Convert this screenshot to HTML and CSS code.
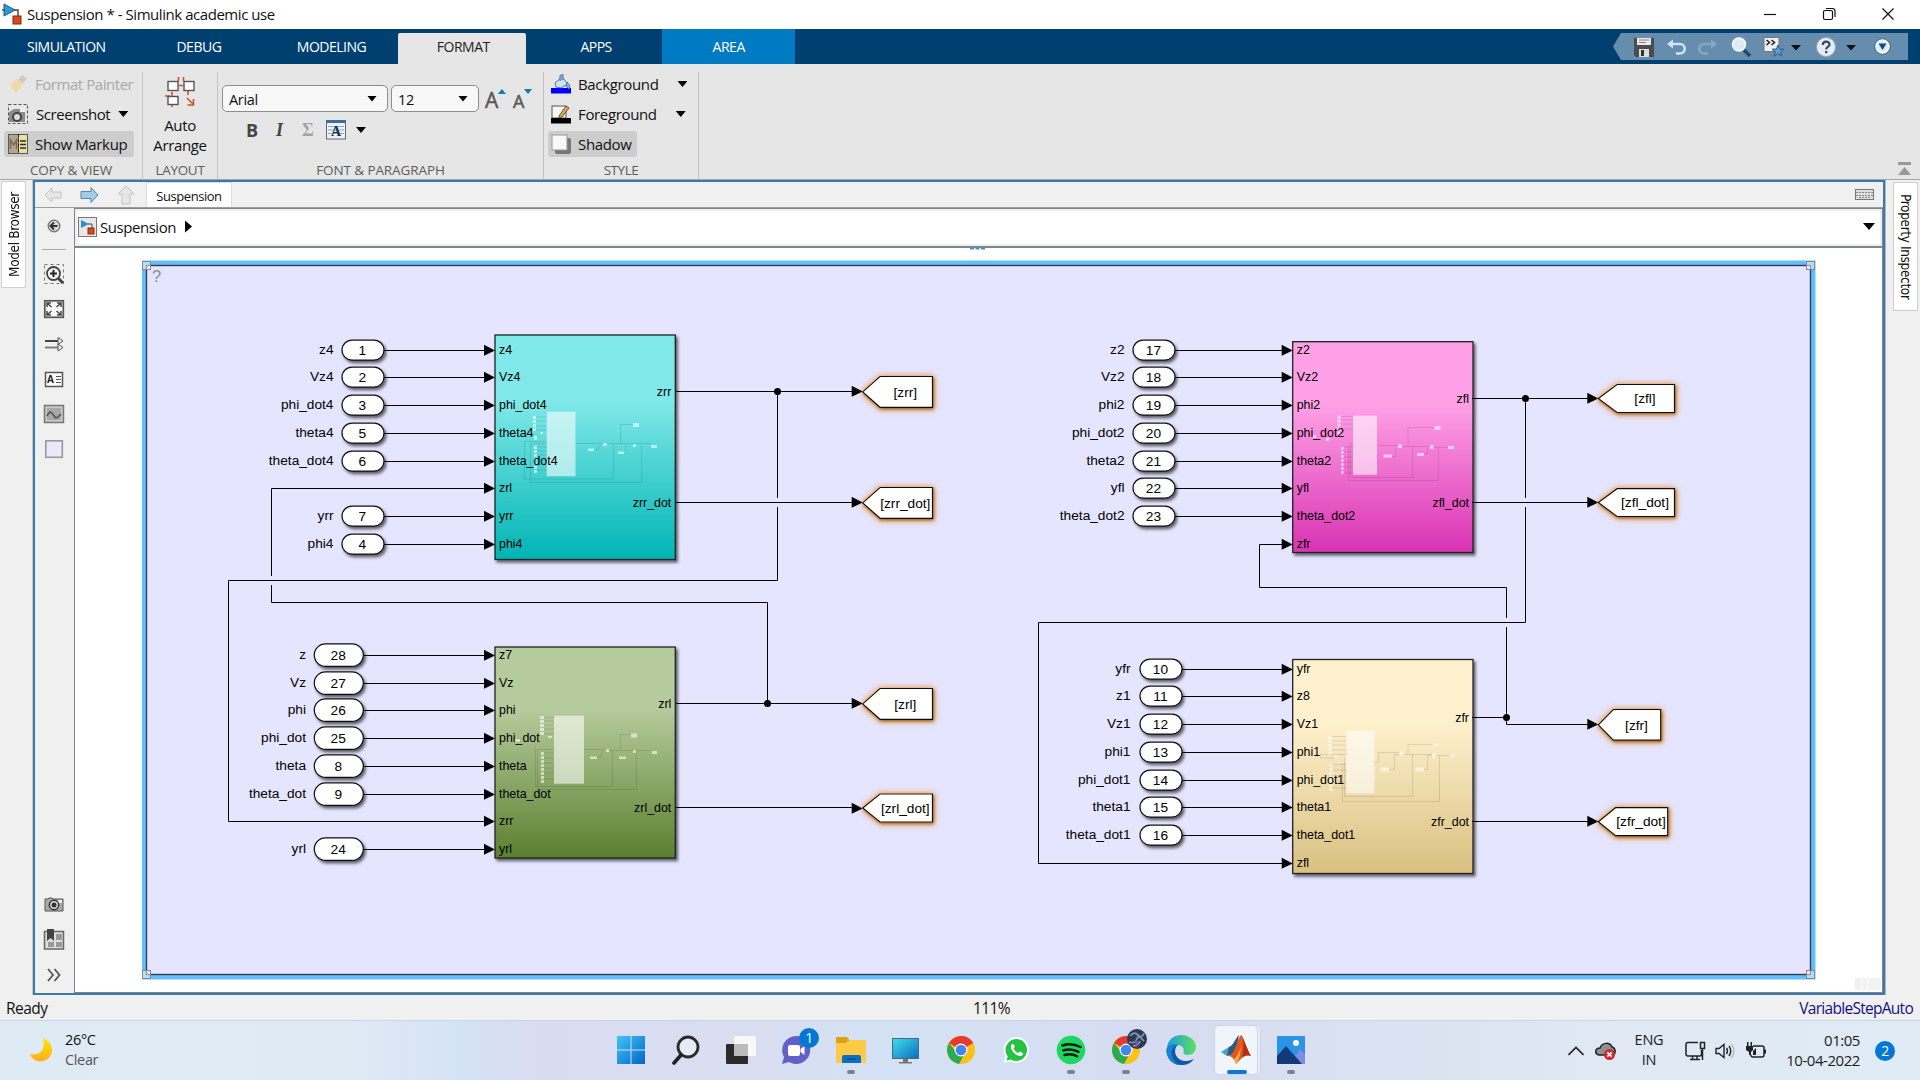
FILE: index.html
```html
<!DOCTYPE html>
<html lang="en">
<head>
<meta charset="utf-8">
<title>Suspension * - Simulink academic use</title>
<link rel="stylesheet" href="styles.css">
</head>
<body>
<div class="app">
  <header class="titlebar">
    <svg class="app-icon" width="20" height="22" viewBox="0 0 20 22"><path d="M2 1v12l11-6z" fill="#2b9bd0" stroke="#14608c"/><path d="M0 7h3M12 7h4v8" fill="none" stroke="#444" stroke-width="1.4"/><rect x="11" y="13" width="8" height="8" fill="#d9481c" stroke="#8c2a0c"/></svg>
    <span class="title">Suspension * - Simulink academic use</span>
    <div class="win-buttons">
      <svg width="14" height="14" viewBox="0 0 14 14"><path d="M1 7.5h12" /></svg>
      <svg width="14" height="14" viewBox="0 0 14 14"><rect x="1.5" y="3.5" width="9" height="9" rx="1.5"/><path d="M4 1.5h6.500a2.500 2.500 0 0 1 2.500 2.500V10"/></svg>
      <svg width="14" height="14" viewBox="0 0 14 14"><path d="M1.500 1.500l11 11M12.500 1.500l-11 11"/></svg>
    </div>
  </header>

  <nav class="tabs">
    <span class="tab">SIMULATION</span>
    <span class="tab">DEBUG</span>
    <span class="tab">MODELING</span>
    <span class="tab active">FORMAT</span>
    <span class="tab">APPS</span>
    <span class="tab area">AREA</span>
    <svg class="quick" width="295" height="27" viewBox="1613 33 295 27">
      <path d="M1613 46.500l8-13.500h287v27h-287z" fill="#668dae"/>
      <path d="M1634 38h20v19h-18l-2-2z" fill="#4c4c4c"/><rect x="1637" y="38" width="14" height="7" fill="#e8e8e8"/><path d="M1639 40h10M1639 42.500h7" stroke="#888"/><rect x="1639" y="49" width="10" height="8" fill="#ddd"/><rect x="1641" y="50" width="3" height="6" fill="#333"/>
      <path d="M1671 44h9a4.500 4.500 0 0 1 0 9.500h-4" fill="none" stroke="#cfe3f4" stroke-width="2.600"/><path d="M1667 44l6-4.500v9z" fill="#cfe3f4"/>
      <path d="M1713 44h-9a4.500 4.500 0 0 0 0 9.500h4" fill="none" stroke="#86a8c4" stroke-width="2.600"/><path d="M1717 44l-6-4.500v9z" fill="#86a8c4"/>
      <path d="M1743 49l7 7" stroke="#1d4c73" stroke-width="3.500"/><circle cx="1739" cy="44.500" r="6.500" fill="#dfeaf3" stroke="#f8fbfd" stroke-width="1.500"/>
      <rect x="1764" y="37.500" width="15" height="14" fill="#f0f0f0" stroke="#777"/><path d="M1766.500 40l3 2.500-3 2.500M1771.500 40l3 2.500-3 2.500" fill="none" stroke="#222" stroke-width="1.600"/><path d="M1778 45l1.600 4 4.400.2-3.400 2.700 1.200 4.300-3.800-2.400-3.800 2.400 1.200-4.300-3.400-2.700 4.400-.2z" fill="#5f9bd0" stroke="#2f5f8c"/>
      <path d="M1791 45h10l-5 5.500z" fill="#111"/>
      <circle cx="1826" cy="47" r="9.500" fill="#e9edf2" stroke="#98a8b8"/><path d="M1822.800 45c0-4.500 6.700-4.300 6.700-.6 0 2.600-3.300 2.400-3.300 5M1826.200 51v2.200" fill="none" stroke="#3a4a66" stroke-width="2.300"/>
      <path d="M1846 45h10l-5 5.500z" fill="#111"/>
      <circle cx="1882.500" cy="46.500" r="6.500" fill="#dfe9f2" stroke="#fff" stroke-width="2"/><circle cx="1882.500" cy="46.500" r="7.800" fill="none" stroke="#2a628f" stroke-width=".8"/><path d="M1878.500 43.500h8l-4 6.500z" fill="#0b4f86"/>
    </svg>
  </nav>

  <section class="ribbon">
    <div class="group g-copy">
      <div class="rows">
        <div class="cmd disabled"><svg width="20" height="20" viewBox="0 0 20 20"><path d="M14 1l5 4-5 5-4-4z" fill="#c9c9c9"/><path d="M10 5l5 5-7 9-7-9z" fill="#eddca4"/></svg><span>Format Painter</span></div>
        <div class="cmd"><svg width="20" height="20" viewBox="0 0 20 20"><rect x=".5" y=".5" width="19" height="19" fill="none" stroke="#555" stroke-dasharray="3 2"/><path d="M1 8l5-3h11v13H1z" fill="#8b8b8b"/><rect x="12" y="4" width="5" height="4" fill="#eee"/><circle cx="9" cy="13" r="5" fill="#444"/><circle cx="9" cy="13" r="3" fill="#ddd"/></svg><span class="shift">Screenshot</span><i class="tri"></i></div>
        <div class="cmd pressed"><svg width="20" height="20" viewBox="0 0 20 20"><rect width="20" height="20" fill="#4a5a78"/><rect x="1" y="1" width="9" height="18" fill="#b9a58a"/><rect x="11" y="1" width="8" height="18" fill="#f5df8c"/><path d="M2.500 15V6l3 5 3-5v9" fill="none" stroke="#7a6a50" stroke-width="1.500"/><path d="M12 7h6M12 10.500h6M12 14h6" stroke="#1d2c50" stroke-width="1.600"/><path d="M10.500 0v20" stroke="#222" stroke-dasharray="3 2"/></svg><span>Show Markup</span></div>
      </div>
      <div class="glabel">COPY &amp; VIEW</div>
    </div>
    <div class="group g-layout">
      <div class="big">
        <svg width="32" height="32" viewBox="0 0 32 32"><g fill="none" stroke="#d4512c" stroke-width="1.600"><path d="M14.500 1v4M19.500 1v4M15 9.500h4M8 16v5M24 15v4M1 20h5M8 26v5"/><path d="M23 22l7 7M29.500 23v6h-6"/></g><g fill="#fff" stroke="#555" stroke-width="1.400"><rect x="4" y="5.500" width="10" height="9"/><rect x="20" y="5.500" width="10" height="9"/><rect x="4" y="20.500" width="10" height="8"/></g></svg>
        <span>Auto</span><span>Arrange</span>
      </div>
      <div class="glabel">LAYOUT</div>
    </div>
    <div class="group g-font">
      <div class="fontrow">
        <div class="combo family"><span>Arial</span><i class="tri"></i></div>
        <div class="combo size"><span>12</span><i class="tri"></i></div>
        <div class="grow"><b>A</b><i class="up"></i></div>
        <div class="grow small"><b>A</b><i class="dn"></i></div>
      </div>
      <div class="stylerow">
        <span class="st-b">B</span><span class="st-i">I</span><span class="st-s">Σ</span>
        <svg width="20" height="20" viewBox="0 0 20 20"><rect x=".5" y=".5" width="19" height="18.500" fill="#eef2f6" stroke="#5b6876"/><rect width="20" height="3" fill="#3d6f9e"/><path d="M2 6.500h16M2 10h16M2 13.500h16" stroke="#88a8c8"/><text x="10" y="16" text-anchor="middle" class="ico-a">A</text></svg>
        <i class="tri"></i>
      </div>
      <div class="glabel">FONT &amp; PARAGRAPH</div>
    </div>
    <div class="group g-style">
      <div class="rows">
        <div class="cmd"><svg width="20" height="20" viewBox="0 0 20 20"><rect y="14" width="20" height="5.500" fill="#00f"/><path d="M4 9l7-6 6 7-7 4-5-1z" fill="#cfe0f0" stroke="#4a76a8"/><path d="M9 7V1.500l3-1V6M16 8l3 4-1 3-3-3z" fill="#8fb4dc" stroke="#4a76a8"/></svg><span>Background</span><i class="tri far"></i></div>
        <div class="cmd"><svg width="20" height="20" viewBox="0 0 20 20"><rect x="1" y="2" width="14" height="12" fill="#f6f6f6" stroke="#555"/><path d="M8 12L15 2l3 2-7 9-3 1z" fill="#e0a562" stroke="#6e5030"/><rect y="14" width="20" height="5.500" fill="#000"/></svg><span>Foreground</span><i class="tri far"></i></div>
        <div class="cmd pressed"><svg width="20" height="20" viewBox="0 0 20 20"><rect x="4" y="4" width="16" height="16" rx="2" fill="#777"/><rect x="1" y="1" width="15" height="15" fill="#f8f8f8" stroke="#999"/></svg><span>Shadow</span></div>
      </div>
      <div class="glabel">STYLE</div>
    </div>
    <div class="spacer"></div>
    <svg class="collapse" width="13" height="13" viewBox="0 0 13 13"><path d="M0 0h13v3H0zM6.500 5L13 13H0z" fill="#999"/></svg>
  </section>

  <main class="work">
    <aside class="dock"><div class="docktab left">Model Browser</div></aside>
    <div class="frame">
      <div class="doctabs">
        <svg width="18" height="18" viewBox="0 0 18 18"><path d="M1 9l7-7v4h9v6H8v4z" fill="#e6e6e6" stroke="#c4c4c4"/></svg>
        <svg width="19" height="18" viewBox="0 0 19 18"><path d="M18 9l-7-7.500v4H1v7h10v4z" fill="#a5cbe6" stroke="#5b86a6"/></svg>
        <svg width="18" height="20" viewBox="0 0 18 20"><path d="M9 1l8 8h-4v10H5V9H1z" fill="#e6e6e6" stroke="#c4c4c4"/></svg>
        <span class="doctab">Suspension</span>
        <svg class="kbd" width="19" height="11" viewBox="0 0 19 11"><rect x=".5" y=".5" width="18" height="10" fill="#ddd" stroke="#777"/><path d="M1 3.500h17M1 6.500h17M4 8.500h11" stroke="#888" stroke-dasharray="2 1"/></svg>
      </div>
      <div class="editor">
        <div class="palette">
          <svg width="22" height="22" viewBox="0 0 22 22"><circle cx="11" cy="11" r="5.800" fill="#ddd" stroke="#777" stroke-width="1.400"/><path d="M14.500 11H8M11 7.500L7.500 11l3.500 3.500" fill="none" stroke="#333" stroke-width="2"/></svg>
          <hr>
          <svg width="22" height="22" viewBox="0 0 22 22"><rect x="1.500" y="1.500" width="19" height="19" fill="none" stroke="#777" stroke-dasharray="3 3"/><circle cx="10.500" cy="10.500" r="6.500" fill="#f4f4f4" stroke="#444" stroke-width="1.800"/><path d="M7 10.500h7M10.500 7v7" stroke="#222" stroke-width="2"/><path d="M15 15l5 5" stroke="#444" stroke-width="3"/></svg>
          <svg width="22" height="22" viewBox="0 0 22 22"><rect x="1.800" y="2.800" width="18.500" height="16.500" fill="#fafafa" stroke="#555" stroke-width="1.700"/><path d="M4 9V5h4M18 9V5h-4M4 13v4h4M18 13v4h-4M4.500 5.500l4 3.500M17.500 5.500l-4 3.500M4.500 16.500l4-3.500M17.500 16.500l-4-3.500" fill="none" stroke="#444" stroke-width="1.500"/></svg>
          <svg width="22" height="22" viewBox="0 0 22 22"><path d="M2 8h15" stroke="#333" stroke-width="1.800"/><path d="M2 14.500h15" stroke="#777" stroke-width="1.800"/><path d="M15 4.500v7l5-3.500zM15 11v7l5-3.500z" fill="#eee" stroke="#555"/></svg>
          <svg width="22" height="22" viewBox="0 0 22 22"><rect x="2.500" y="4.500" width="17" height="14" fill="#fcfcfc" stroke="#555" stroke-width="1.500"/><text x="4" y="15" class="pal-a">A</text><path d="M13 8.500h5M13 11.500h5M13 14.500h5" stroke="#555"/></svg>
          <svg width="22" height="22" viewBox="0 0 22 22"><rect x="1.500" y="2.500" width="19" height="17" fill="#c8c8c8" stroke="#777" stroke-width="1.500"/><rect x="4" y="5" width="14" height="12" fill="#a8a8a8"/><path d="M4 13c3-6 5-4 7 0s4 1 7-2" fill="none" stroke="#555" stroke-width="1.700"/></svg>
          <svg width="22" height="22" viewBox="0 0 22 22"><rect x="2.800" y="2.800" width="16.500" height="16.500" fill="#e9e9fa" stroke="#999" stroke-width="1.600"/></svg>
          <div class="spacer"></div>
          <svg width="22" height="22" viewBox="0 0 22 22"><path d="M2 5h3l1-1h3l1 1h10v12H2z" fill="#aaa" stroke="#555"/><rect x="15" y="6" width="4" height="3" fill="#eee"/><circle cx="11" cy="11" r="4.700" fill="#ddd" stroke="#333" stroke-width="1.500"/><circle cx="11" cy="11" r="2.500" fill="#333"/></svg>
          <svg width="22" height="22" viewBox="0 0 22 22"><rect x="1.500" y="2.500" width="19" height="17.500" fill="#ddd" stroke="#666" stroke-width="1.500"/><path d="M13 5h6v6h-6zM13 13h6v5h-6zM5 13h6v5H5z" fill="#999"/><path d="M4 0h7v12l-3.500-3L4 12z" fill="#444"/></svg>
          <svg width="22" height="22" viewBox="0 0 22 22"><path d="M5 5l5 6-5 6M11.500 5l5 6-5 6" fill="none" stroke="#555" stroke-width="1.800"/></svg>
        </div>
        <div class="view">
          <div class="crumb">
            <svg width="19" height="20" viewBox="0 0 19 20"><rect x=".5" y=".5" width="18" height="19" fill="#e8e8e8" stroke="#777"/><path d="M3 3v8l8-4z" fill="#2b8fd0"/><path d="M10 7h4v4" fill="none" stroke="#444"/><rect x="10" y="11" width="6" height="6" fill="#d9481c" stroke="#8c2a0c"/></svg>
            <span>Suspension</span><i class="play"></i><i class="tri drop"></i>
          </div>
          <svg id="canvas" class="canvas" width="1807" height="744" viewBox="75 248 1807 744"></svg>
        </div>
      </div>
    </div>
    <aside class="dock right"><div class="docktab">Property Inspector</div></aside>
  </main>

  <footer class="status"><span class="ready">Ready</span><span class="zoom">111%</span><span class="solver">VariableStepAuto</span></footer>

  <div class="taskbar">
    <div class="weather">
      <svg width="24" height="26" viewBox="0 0 24 26"><defs><linearGradient id="moon" x1="0" y1="0" x2="0" y2="1"><stop offset="0" stop-color="#ffe600"/><stop offset="1" stop-color="#ffad1f"/></linearGradient></defs><path d="M14 1c11 5 12 17 3 22-6 3-14 1-16-6 10 2 16-5 13-16z" fill="url(#moon)"/></svg>
      <div><div>26°C</div><div class="dim">Clear</div></div>
    </div>
    <div class="apps">
      <div class="app-btn"><svg width="30" height="30" viewBox="0 0 30 30"><defs><linearGradient id="win" x1="0" y1="0" x2="1" y2="1"><stop offset="0" stop-color="#40c4f8"/><stop offset="1" stop-color="#0466c8"/></linearGradient></defs><path d="M1 1h13.500v13.500H1zM15.500 1H29v13.500H15.500zM1 15.500h13.500V29H1zM15.500 15.500H29V29H15.500z" fill="url(#win)"/></svg></div>
      <div class="app-btn"><svg width="30" height="30" viewBox="0 0 30 30"><circle cx="17" cy="12" r="10" fill="#e6ebf6" stroke="#2b2b2b" stroke-width="2.800"/><path d="M10 20l-7 8" stroke="#222" stroke-width="3.600" stroke-linecap="round"/></svg></div>
      <div class="app-btn"><svg width="30" height="30" viewBox="0 0 30 30"><rect y="9" width="22" height="20" rx="1" fill="#2b2b2b"/><rect x="8" y="1" width="22" height="20" rx="1" fill="#fafafa" fill-opacity=".93"/><rect x="8" y="9" width="14" height="12" fill="#bbb"/></svg></div>
      <div class="app-btn"><svg width="30" height="30" viewBox="0 0 30 30"><path d="M15 1a14 14 0 1 1-7 26l-7 2 2-7A14 14 0 0 1 15 1z" fill="#6260c8"/><rect x="7" y="10" width="12" height="11" rx="2" fill="#fff"/><path d="M19.500 14l4-3v9l-4-3z" fill="#fff"/></svg><span class="badge">1</span></div>
      <div class="app-btn run"><svg width="30" height="30" viewBox="0 0 30 30"><path d="M0 2h11l3 4h-3v6H0z" fill="#e0a010"/><path d="M0 8h11l3-3h16v23H0z" fill="#fcca44"/><path d="M6 28v-6q0-2 2-2h15q2 0 2 2v6z" fill="#0b6fc8"/><path d="M11 24h9" stroke="#084b8c" stroke-width="1.500"/></svg></div>
      <div class="app-btn"><svg width="30" height="30" viewBox="0 0 30 30"><defs><linearGradient id="mon" x1="0" y1="0" x2="1" y2="1"><stop offset="0" stop-color="#3fe0ea"/><stop offset="1" stop-color="#0b6cc0"/></linearGradient></defs><rect x="1.500" y="3.500" width="26" height="20" fill="url(#mon)" stroke="#4c6878"/><path d="M12 24h5v3h4v1.500H8V27h4z" fill="#777"/></svg></div>
      <div class="app-btn"><svg width="30" height="30" viewBox="0 0 30 30"><g id="chrome"><circle cx="15" cy="15" r="14" fill="#fbc116"/><path d="M15 15L2.900 8A14 14 0 0 1 27.100 8z" fill="#e33b2e"/><path d="M15 1a14 14 0 0 1 12.100 7H15z" fill="#e33b2e"/><path d="M2.900 8A14 14 0 0 0 13 28.900L19 18l-8 0z" fill="#2da94f"/><circle cx="15" cy="15" r="6.500" fill="#fff"/><circle cx="15" cy="15" r="5.300" fill="#4285f4"/></g></svg></div>
      <div class="app-btn"><svg width="30" height="30" viewBox="0 0 30 30"><path d="M15 2a13 13 0 1 1-6 24.500L2.500 28l1.800-6.500A13 13 0 0 1 15 2z" fill="#fff"/><path d="M15 4a11 11 0 1 1-5.500 20.500L5.500 25.500l1.200-4A11 11 0 0 1 15 4z" fill="#25c33f"/><path d="M11 9c-4 4 4 13 9 12 3-1 2-3 1-3.500l-2.500-1-1.500 1.500c-2-1-3.500-2.500-4.500-4.500l1.300-1.500-1-3z" fill="#fff"/></svg></div>
      <div class="app-btn run"><svg width="30" height="30" viewBox="0 0 30 30"><circle cx="15" cy="15" r="14.300" fill="#1ed760"/><path d="M6.500 10.500q9-3 18 1.500M7.500 15.300q8-2.300 15 1.500M8.500 20q7-2 12.500 1.300" fill="none" stroke="#0b1a10" stroke-width="2.500" stroke-linecap="round"/></svg></div>
      <div class="app-btn run"><svg width="44" height="44" viewBox="-7 -7 44 44"><use href="#chrome"/><circle cx="26" cy="4" r="10" fill="#2c3a52"/><path d="M19 1q4-5 8-1t6-2M18 7q7 2 8-3t7 2M22 11q6-1 7-5" fill="none" stroke="#7f93b8" stroke-width="1.800"/><path d="M24 5q3 3 1 7" stroke="#80589c" stroke-width="2" fill="none"/></svg></div>
      <div class="app-btn"><svg width="30" height="30" viewBox="0 0 30 30"><defs><linearGradient id="edge" x1="0" y1="0" x2="1" y2="0"><stop offset="0" stop-color="#1a9be0"/><stop offset="1" stop-color="#5ee060"/></linearGradient></defs><path d="M1 14C1 5 8 0 15 0c9 0 15 6 15 12 0 5-4 8-8 8-3 0-5-1-4.500-3 1-3-1-7-6-7-6 0-10 3-10.500 4z" fill="url(#edge)"/><path d="M.500 14C3 10 8 8.500 12 10c-5 3-4 15 7 16 4 .300 7-1 9-2.500C25 29 20 30 15 30 6 30 0 23 .500 14z" fill="#0c59a4"/><path d="M11 10c-9 3-6 18 4 20-9 0-14.500-7-14.500-15C3 10 8 9 11 10z" fill="#1583d6"/></svg></div>
      <div class="app-btn run current"><svg width="30" height="30" viewBox="0 0 30 30"><path d="M0 17l8-5 3 3-5 6z" fill="#4a9fd0"/><path d="M8 12c4-1 6-8 10-12l-2 12-5 8-5 1z" fill="#2c5a80"/><path d="M20 0c3 3 6 15 10 21-5-2-9 1-15 8-1-4-3-7-7-8 7-3 8-17 12-21z" fill="#e0581c"/><path d="M20 0c1 9-1 20-7 24 2 2 2 5 2 5 4-5 5-12 5-29z" fill="#f6b040"/><path d="M20 0c3 5 3 12 1 22 4-2 7-2 9-1C26 15 23 3 20 0z" fill="#b03016"/></svg></div>
      <div class="app-btn run"><svg width="30" height="30" viewBox="0 0 30 30"><rect x="1" y="1" width="28" height="28" fill="#2b93e8"/><path d="M14 29l10-15 5 5v10z" fill="#7d8ce8"/><path d="M1 21l9-10 16 18H1z" fill="#123a78"/><circle cx="20" cy="8" r="3" fill="#fff"/></svg></div>
    </div>
    <div class="tray">
      <svg class="chev" width="16" height="10" viewBox="0 0 16 10"><path d="M.500 9L8 1.500 15.500 9" fill="none" stroke="#222" stroke-width="1.600"/></svg>
      <svg class="cloud" width="21" height="18" viewBox="0 0 21 18"><path d="M4 13C-1 12 0 6 5 6c2-6 10-6 12-1 4 1 4 7 1 8z" fill="#909090" stroke="#222" stroke-width="1.500"/><circle cx="14.500" cy="12.500" r="5.500" fill="#d8262e"/><path d="M12.300 10.300l4.400 4.400M16.700 10.300l-4.400 4.400" stroke="#fff" stroke-width="1.700"/></svg>
      <div class="lang"><div>ENG</div><div>IN</div></div>
      <svg class="net" width="21" height="20" viewBox="0 0 21 20" fill="none" stroke="#222" stroke-width="1.500"><path d="M13 1.500H3q-2 0-2 2V13q0 2 2 2h12q1.500 0 1.500-1.500V9M5 18.500h10M7.500 15v3M12 15v3M15.500 1.500h4v6h-4zM17.500 8v11"/></svg>
      <svg class="vol" width="20" height="16" viewBox="0 0 20 16" fill="none" stroke="#222" stroke-width="1.400"><path d="M1 5.500h3L9 1.500v13L4 10.500H1zM11.500 5q2 3 0 6M14 3q3.500 5 0 10"/><path d="M16.500 1q5 7 0 14" stroke="#bbb"/></svg>
      <svg class="bat" width="20" height="18" viewBox="0 0 20 18"><path d="M7 4h9q2 0 2 2v7q0 2-2 2H7q-2 0-2-2" fill="none" stroke="#222" stroke-width="1.500"/><path d="M0 4h7v4L5 10v3H3v-3L0 8zM1 0h1.500v4H1zM4.500 0H6v4H4.500zM18 7.500h2v4h-2z" fill="#222"/><path d="M7 13V9l3-3v7z" fill="#222"/></svg>
      <div class="clock"><div>01:05</div><div>10-04-2022</div></div>
      <span class="notif">2</span>
    </div>
  </div>
</div>
<script src="script.js"></script>
</body>
</html>
```
FILE: styles.css
```css
* { box-sizing: border-box; }
body { margin: 0; background: #f0f0f0; font-family: "Open Sans", "Noto Sans", sans-serif; font-size: 15px; letter-spacing: -0.35px; color: #111; overflow: hidden; }
.app { width: 1920px; height: 1080px; display: flex; flex-direction: column; }
svg { flex: none; display: block; }
.spacer { flex: 1; }

.titlebar { height: 29px; background: #fff; display: flex; align-items: center; padding-left: 2px; }
.app-icon { margin-top: -1px; }
.title { margin-left: 5px; margin-top: -2px; flex: 1; letter-spacing: -0.45px; }
.win-buttons { display: flex; gap: 45px; padding-right: 25px; margin-top: -1px; }
.win-buttons svg { fill: none; stroke: #111; stroke-width: 1.2; }

.tabs { height: 35px; background: #004071; display: flex; align-items: stretch; color: #fff; }
.tab { width: 132.6px; display: flex; align-items: center; justify-content: center; font-size: 14px; letter-spacing: -0.5px; }
.tab.active { width: 128px; margin: 4px 4px 0 0; background: #e6e6e6; color: #222; border-radius: 2px 2px 0 0; padding: 0 0 4px 3px; }
.tab.area { background: #007ac2; }
.quick { margin: 4px 12px 0 auto; }

.ribbon { height: 116px; background: #e6e6e6; border-bottom: 1px solid #a6a6a6; display: flex; padding-top: 8px; }
.group { display: flex; flex-direction: column; border-right: 1px solid #c4c4c4; height: 107px; }
.g-copy { width: 143px; }
.g-layout { width: 75px; }
.g-font { width: 326px; }
.g-style { width: 155px; }
.rows { display: flex; flex-direction: column; padding: 0 0 0 4px; gap: 4px; margin-top: -1px; }
.cmd { height: 26px; display: flex; align-items: center; padding: 0 7px 0 4px; gap: 7px; align-self: flex-start; border-radius: 3px; white-space: nowrap; }
.cmd .shift { margin-left: 1px; margin-right: 1px; letter-spacing: -0.4px; }
.g-style .cmd { padding-left: 3px; }
.g-style .pressed { padding-right: 6px; }
.disabled { color: #a9a9a9; letter-spacing: -0.45px; }
.pressed { background: #cdcdcd; }
.glabel { margin-top: auto; height: 17px; line-height: 17px; text-align: center; font-size: 13.5px; color: #5c5c5c; letter-spacing: -0.1px; }
.g-layout .glabel { letter-spacing: -0.3px; }
.g-style .glabel { letter-spacing: -0.45px; }
.tri { width: 10px; height: 6px; background: #000; clip-path: polygon(0 0, 100% 0, 50% 100%); flex: none; }
.tri.far { margin-left: 12px; }
.big { display: flex; flex-direction: column; align-items: center; padding-top: 4px; line-height: 20px; }
.big svg { margin-bottom: 7px; }
.fontrow { display: flex; padding: 13px 0 0 4px; gap: 3px; align-items: center; }
.combo { height: 27px; border: 1px solid #8e8e8e; border-radius: 5px; background: #f8f8f8; display: flex; align-items: center; justify-content: space-between; padding: 0 10px 0 6px; font-size: 14.5px; }
.combo span { margin-top: 2px; }
.family { width: 166px; }
.size { width: 88px; }
.grow { display: flex; align-items: flex-start; height: 27px; width: 22px; color: #595959; margin-left: 3px; }
.grow b { font: 500 21px/30px "Open Sans", sans-serif; -webkit-text-stroke: .5px #595959; }
.grow.small b { font-size: 18px; line-height: 33px; }
.up, .dn { width: 8px; height: 5px; margin-top: 4px; background: #0a7cb8; clip-path: polygon(50% 0, 100% 100%, 0 100%); flex: none; }
.dn { clip-path: polygon(0 0, 100% 0, 50% 100%); }
.stylerow { display: flex; align-items: center; padding: 8px 0 0 28px; height: 28px; color: #444; letter-spacing: 0; }
.st-b { width: 29px; font: bold 18px "Open Sans", sans-serif; }
.st-i { width: 27px; font: italic bold 18px "Liberation Serif", serif; padding-left: 1px; }
.st-s { width: 24px; font: bold 18px "Liberation Serif", serif; color: #a4a4a4; }
.stylerow .tri { margin-left: 10px; }
.ico-a { font: bold 14px "Liberation Serif", serif; fill: #1c2c44; }
.collapse { align-self: flex-end; margin: 0 9px 4px 0; }

.work { height: 815px; display: flex; }
.dock { width: 33px; padding: 1px 0 0 1px; border-right: 1px solid #c8c8c8; }
.dock.right { border: 0; border-left: 1px solid #b4b4b4; width: 35px; padding: 2px 0 0 7px; }
.docktab { width: 25px; height: 129px; background: #fff; border: 1px solid #cfcfcf; writing-mode: vertical-rl; display: flex; align-items: center; justify-content: center; font: 13.5px "DejaVu Sans Condensed", "DejaVu Sans", sans-serif; letter-spacing: -0.35px; }
.docktab.left { height: 107px; transform: rotate(180deg); }
.frame { width: 1852px; border: 2px solid #3a7aae; display: flex; flex-direction: column; }
.doctabs { height: 26px; border-bottom: 1px solid #9d9d9d; display: flex; align-items: center; padding: 0 9px 0 9px; gap: 18px; }
.doctab { width: 86px; height: 25px; margin-left: -7px; background: #fff; border: 1px solid #ddd; border-bottom: 0; font-size: 13px; line-height: 26px; text-align: center; letter-spacing: -0.45px; }
.kbd { margin-left: auto; }
.editor { flex: 1; display: flex; min-height: 0; }
.palette { width: 40px; border-right: 1px solid #80848e; display: flex; flex-direction: column; align-items: center; padding: 7px 1px 7px 0; gap: 13px; }
.palette hr { width: 24px; height: 1px; border: 0; background: #aaa; margin: -1px 0 0; }
.palette .spacer { margin: 0; }
.pal-a { font: bold 10px "Open Sans", sans-serif; fill: #222; }
.view { flex: 1; background: #fff; border-right: 1px solid #80848e; border-bottom: 1px solid #80848e; }
.crumb { height: 40px; border-top: 1px solid #80848e; border-bottom: 2px solid #80848e; box-shadow: inset 0 0 0 2px #efefef; display: flex; align-items: center; padding: 0 7px 2px 3px; letter-spacing: -0.45px; }
.crumb span { margin-left: 3px; }
.play { width: 7px; height: 12px; margin-left: 9px; background: #000; clip-path: polygon(0 0, 100% 50%, 0 100%); }
.drop { margin-left: auto; width: 12px; height: 7px; }
.canvas { font-family: "Liberation Sans", Arial, sans-serif; letter-spacing: 0; font-size: 13.7px; }
.wire { fill: none; stroke: #000; stroke-width: 1; }
.in-block { font-size: 12.4px; }

.status { height: 25px; display: grid; grid-template-columns: 1fr auto 1fr; align-items: center; padding: 0 7px 0 6px; font-size: 15.5px; letter-spacing: -0.55px; }
.zoom { position: relative; left: 32px; }
.solver { text-align: right; color: #101080; letter-spacing: -0.72px; }

.taskbar { height: 60px; border-top: 1px solid #c9d5e4; background: linear-gradient(90deg, #deebf4 0, #e0eaf5 18%, #d4e2f6 24%, #d9dcf1 28%, #d9def1 40%, #d4e2f5 46%, #d6dcf1 60%, #dbe3f1 75%, #e0e9f4 85%, #dfebf5 100%); display: flex; font-size: 14.5px; }
.weather { display: flex; width: 610px; padding: 9px 0 0 29px; gap: 12px; line-height: 20px; }
.weather svg { margin-top: 7px; }
.weather .dim { color: #555; }
.apps { display: flex; gap: 11px; padding-top: 5px; margin-left: -1px; }
.app-btn { width: 44px; height: 48px; display: flex; align-items: center; justify-content: center; position: relative; border-radius: 4px; }
.app-btn.run::after { content: ""; position: absolute; bottom: 0; left: 18px; width: 8px; height: 4px; border-radius: 2px; background: #7c828c; }
.app-btn.current { background: #f0f4fb; box-shadow: 0 0 0 1px #cdd6e6, 3px 0 0 #e8edf8, 4px 0 0 #cdd6e6; width: 42px; margin: 0 1px; }
.app-btn.current::after { left: 12px; width: 20px; background: #0a78d4; }
.badge { position: absolute; right: -1px; top: 2px; width: 20px; height: 20px; border-radius: 50%; background: #0078d4; color: #fff; font-size: 14px; line-height: 20px; text-align: center; }
.tray { margin-left: auto; display: flex; align-items: center; padding-right: 25px; color: #1c1c1c; line-height: 20px; }
.cloud { margin-left: 11px; }
.lang { width: 40px; text-align: center; margin: -2px 0 0 13px; letter-spacing: -0.2px; }
.net { margin-left: 16px; }
.vol { margin-left: 9px; }
.bat { margin-left: 11px; }
.clock { width: 80px; margin: -2px 0 0 14px; text-align: right; white-space: nowrap; font-size: 15px; letter-spacing: -0.45px; }
.notif { width: 20px; height: 20px; border-radius: 50%; background: #0078d4; color: #fff; text-align: center; font-size: 14px; line-height: 19px; margin-left: 15px; }
```
FILE: script.js
```js
const out = [];
const add = s => out.push(s);

add(`<defs>
<filter id="shadow" x="-20%" y="-20%" width="150%" height="160%"><feDropShadow dx="2" dy="2.500" stdDeviation="1.8" flood-color="#000" flood-opacity=".6"/></filter>
<filter id="glow" x="-30%" y="-60%" width="160%" height="220%"><feDropShadow dx="1" dy="1.500" stdDeviation="1.4" flood-color="#5a3000" flood-opacity=".7"/><feDropShadow dx="0" dy="0" stdDeviation="3.4" flood-color="#f0902c" flood-opacity="1"/></filter>
</defs>`);

// selected area with its resize handles
add(`<rect x="142" y="260.500" width="1673.500" height="719" fill="#64bfff"/>
<rect x="146.500" y="265.500" width="1664" height="709" fill="#e5e5ff" stroke="#3a3a4a" stroke-width="1.400"/>`);
for (const [x, y] of [[142.5, 261.5], [1806.5, 261.5], [142.5, 970.5], [1806.5, 970.5]])
  add(`<rect x="${x}" y="${y}" width="8" height="8" fill="#fff" fill-opacity=".5" stroke="#888"/>`);
add(`<text x="152" y="282" font-size="16.500" fill="#8a8a9a">?</text>
<path d="M970 248.500h4M975.500 248.500h4M981 248.500h4" stroke="#3a93d0" stroke-width="2"/>
<path d="M1855 978h6v12h-6zM1862 978h5v12h-5zM1868 978h13v12h-13z" fill="#f2f2f2"/>`);

const arrow = (x, y) => add(`<path d="M${x - 11} ${y - 5.8}v11l11-5.300z"/>`);
const wire = d => add(`<path class="wire" d="${d}"/>`);

const blocks = [
  { x: 495, y: 335, b: 559.5, c: ['#80e8e8', '#00b4b4'], px: [342, 384], ph: 20, lx: 333.5,
    ports: [['z4', 350.5, 1], ['Vz4', 377.5, 2], ['phi_dot4', 405.5, 3], ['theta4', 433.5, 5], ['theta_dot4', 461.5, 6], ['zrl', 488.5], ['yrr', 516.5, 7], ['phi4', 544.5, 4]],
    outs: [['zrr', 391.5], ['zrr_dot', 502.5]] },
  { x: 495, y: 647, b: 858, c: ['#b5cb9b', '#5b8030'], px: [314.3, 363.3], ph: 22.5, lx: 306,
    ports: [['z7', 655.5, 28, 'z'], ['Vz', 683.5, 27], ['phi', 710.5, 26], ['phi_dot', 738.5, 25], ['theta', 766.5, 8], ['theta_dot', 794.5, 9], ['zrr', 821.5], ['yrl', 849.5, 24]],
    outs: [['zrl', 703.5], ['zrl_dot', 807.5]] },
  { x: 1292.7, y: 341.7, b: 552.5, c: ['#ffa0e6', '#d933b3'], px: [1133, 1175], ph: 20, lx: 1124.5,
    ports: [['z2', 350.5, 17], ['Vz2', 377.5, 18], ['phi2', 405.5, 19], ['phi_dot2', 433.5, 20], ['theta2', 461.5, 21], ['yfl', 488.5, 22], ['theta_dot2', 516.5, 23], ['zfr', 544.5]],
    outs: [['zfl', 398.5], ['zfl_dot', 502.5]] },
  { x: 1292.7, y: 659.5, b: 873.5, c: ['#fff0cd', '#d9c080'], px: [1140, 1182], ph: 20, lx: 1130.5,
    ports: [['yfr', 669.5, 10], ['z8', 696.5, 11, 'z1'], ['Vz1', 724.5, 12], ['phi1', 752.5, 13], ['phi_dot1', 780.5, 14], ['theta1', 807.5, 15], ['theta_dot1', 835.5, 16], ['zfl', 863.5]],
    outs: [['zfr', 717.5], ['zfr_dot', 821.5]] }
];

// thumbnail of each subsystem's contents: big box, small parts, thin connections
const previews = [
  { box: [546.7, 411.7, 28.8, 64.5], parts: [[533, 416, 3, 15], [534, 436, 3, 4], [534, 446, 3, 26], [540, 432, 3, 2], [588, 448.5, 6, 2.5], [603, 443, 4, 3], [618, 451.5, 6, 2.5], [633, 444, 3, 3], [633, 423, 6, 4], [651, 445, 6, 3]],
    lines: 'M536 417h11M536 421h11M536 426h11M536 430h11M536 447h11M536 451h11M536 455h11M536 460h11M536 465h11M536 470h11M576 443.500h75M594 449.500h4.500v-4M620.500 444V424.500h13M625.500 451h0v-6M613.500 444v35H524.500V441.500h22M641.500 446v36.500H530.500V443.500h16' },
  { box: [554, 715.700, 30, 68], parts: [[540, 716, 4, 19], [515, 739, 5, 3], [541, 752, 3, 32], [548, 736, 4, 2], [590, 756.500, 7, 2.500], [606, 749, 3, 3], [619, 756.500, 7, 2.500], [633, 750, 3, 3], [631, 733.500, 6, 4], [652, 751, 5, 3]],
    lines: 'M544 717.500h10M544 721h10M544 725h10M544 729h10M544 733.500h10M544 753h10M544 758h10M544 763h10M544 768h10M544 773h10M544 779h10M584 749.500h24M597 757h4.500v-6M609 750.500h42M620.500 750V734.500h11M612.500 750v36.500H535.500V746M636.500 751v38.500H537.500V749.500h16' },
  { box: [1353, 415.700, 24, 59], parts: [[1337.500, 415.500, 3, 18], [1341, 447, 2.500, 28], [1313, 435, 3, 3], [1326, 438, 3, 3], [1383.500, 454.500, 8.500, 3], [1398, 444.500, 4, 3.500], [1417, 453, 7, 3], [1430, 445, 3.500, 4], [1434.500, 426, 6, 4], [1448, 446, 6, 3]],
    lines: 'M1341 416.500h12M1341 420h12M1341 424h12M1341 429h12M1344 447h9M1344 452h9M1344 457h9M1344 462h9M1344 467h9M1344 473h9M1377 445.500h21M1392 456.500h3.500v-8M1402 446.500h28M1408 446V427.500h26M1412.500 446v31.500H1350.500V442M1424 454h3.500v-6M1434 447.500h14M1438.500 447v33.500H1348.500V445' },
  { box: [1346.500, 730.500, 28, 63], parts: [[1328.500, 736, 3, 17], [1329.500, 764, 3, 25], [1334.500, 755.500, 3, 3], [1380.500, 767.500, 8.500, 4], [1399.500, 751.500, 4, 4], [1415.500, 767.500, 8.500, 4], [1432, 753.500, 4, 4], [1433, 743.500, 5, 2.500], [1450, 754.500, 5, 2]],
    lines: 'M1332 736.500h14M1332 741h14M1332 745h14M1332 750h14M1320.500 754.500h26M1320.500 754v4h14M1332 764.500h14M1332 770h14M1332 776h14M1332 782h14M1332 788h14M1374 762.500h4.500v-10h21M1389 769.500h5.500V754.500h5M1403 754.500h29M1408 754V744.500h25M1412.500 754v42.500H1344.500V758M1424 769.500h3.500V755.500h5M1436 755.500h14M1439.500 756v45.500H1342.500V763' }
];

blocks.forEach((k, i) => {
  add(`<linearGradient id="fill${i}" x1="0" y1="0" x2="0" y2="1"><stop offset=".3" stop-color="${k.c[0]}"/><stop offset="1" stop-color="${k.c[1]}"/></linearGradient>
<rect x="${k.x}" y="${k.y}" width="180.300" height="${k.b - k.y}" fill="url(#fill${i})" stroke="#222" stroke-width="1.300" filter="url(#shadow)"/>`);
  const p = previews[i];
  add(`<path d="${p.lines}" fill="none" stroke="#000" stroke-opacity=".1"/><g fill="#fff" fill-opacity=".58"><rect x="${p.box[0]}" y="${p.box[1]}" width="${p.box[2]}" height="${p.box[3]}"/>`);
  p.parts.forEach(([x, y, w, h]) => {
    for (let dy = 0; dy < h; dy += h > 8 ? 4 : h) add(`<rect x="${x}" y="${y + dy}" width="${w}" height="${h > 8 ? 3 : h}"/>`);
  });
  add('</g>');
  k.ports.forEach(([name, y, num, label]) => {
    if (num) {
      const [a, b] = k.px, h = k.ph;
      wire(`M${b} ${y}H${k.x - 10}`);
      add(`<rect x="${a}" y="${y - .4 - h / 2}" width="${b - a}" height="${h}" rx="${h / 2}" fill="#fff" stroke="#111" stroke-width="1.200" filter="url(#shadow)"/>
<text x="${(a + b) / 2 - .6}" y="${y + 4.5}" text-anchor="middle">${num}</text>
<text x="${k.lx}" y="${y + 3.6}" text-anchor="end">${label || name}</text>`);
    }
    arrow(k.x, y);
    add(`<text class="in-block" x="${k.x + 4}" y="${y + 3.7}">${name}</text>`);
  });
  k.outs.forEach(([name, y]) => add(`<text class="in-block" x="${k.x + 176.3}" y="${y + 4.3}" text-anchor="end">${name}</text>`));
});

// signal lines; a vertical line breaks where it crosses a horizontal one
wire('M676 391.500H852M676 502.500H852M777.500 391.500V498M777.500 507V580.500H228.500V821.500H485');
wire('M676 703.500H852M676 807.500H852M767.500 703.500V602.500H271.500V585M271.500 576V488.500H485');
wire('M1472 398.500H1588M1472 502.500H1588M1525.500 398.500V498M1525.500 507V622.500H1038.500V863.500H1283');
wire('M1472 717.500H1506.500M1472 821.500H1588M1283 544.500H1259.500V587.500H1506.500V618M1506.500 627V724.500H1588');
for (const [x, y] of [[777.5, 391.5], [767.5, 703.5], [1525.5, 398.5], [1506.5, 717.5]])
  add(`<circle cx="${x}" cy="${y}" r="3.500"/>`);

const tags = [
  ['[zrr]', 862.7, 880, 932.5, 376.5, 407.3, 905.3], ['[zrr_dot]', 862.7, 880, 932.5, 487.5, 518.3, 905.3],
  ['[zrl]', 862.7, 880, 932.5, 688.5, 719.3, 905.3], ['[zrl_dot]', 862.7, 880, 932.5, 794, 822, 905.3],
  ['[zfl]', 1598.3, 1617, 1674.5, 384.5, 412.5, 1645], ['[zfl_dot]', 1598.3, 1617, 1674.5, 488.7, 516.5, 1645],
  ['[zfr]', 1598.3, 1613.3, 1660.7, 709.5, 740.2, 1636.5], ['[zfr_dot]', 1598.3, 1615.5, 1667.7, 807.7, 835.7, 1641]
];
tags.forEach(([t, x0, x1, x2, y0, y1, tx]) => {
  const m = (y0 + y1) / 2;
  add(`<path d="M${x0} ${m}L${x1} ${y0}H${x2}V${y1}H${x1}z" fill="#fff" stroke="#111" stroke-width="1.200" filter="url(#glow)"/>
<text x="${tx}" y="${m + 4.7}" text-anchor="middle">${t}</text>`);
  arrow(x0, Math.floor(m) + .5);
});

document.getElementById('canvas').innerHTML = out.join('\n');
```
